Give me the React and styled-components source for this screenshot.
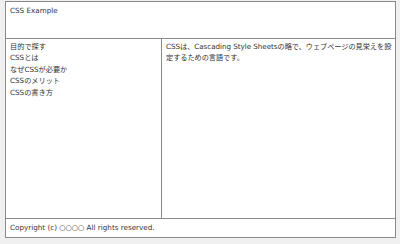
import React from 'react'
import styled, { createGlobalStyle } from 'styled-components'

const Global = createGlobalStyle`
  html, body {
    margin: 0;
    padding: 0;
    background: #f0f0f0;
  }
  body {
    font-family: "DejaVu Sans", "Noto Sans CJK JP", sans-serif;
    font-size: 7.2px;
    line-height: 11.5px;
    color: #333;
  }
`

const navItems = ['目的で探す', 'CSSとは', 'なぜCSSが必要か', 'CSSのメリット', 'CSSの書き方']

export default function App() {
  return (
    <>
      <Global />
      <Page>
        <Header>CSS Example</Header>
        <Main>
          <Nav>
            {navItems.map(item => (
              <NavItem key={item}>{item}</NavItem>
            ))}
          </Nav>
          <Content>
            CSSは、Cascading Style Sheetsの略で、ウェブページの見栄えを設定するための言語です。
          </Content>
        </Main>
        <Footer>Copyright (c) ○○○○ All rights reserved.</Footer>
      </Page>
    </>
  )
}

const Page = styled.div`
  margin: 1px 0 0 5px;
  width: 391px;
  height: 237px;
  box-sizing: border-box;
  border: 1px solid #8a8a8a;
  background: #fff;
  display: grid;
  grid-template-rows: 37px 1fr 18px;
`

const Header = styled.header`
  padding: 3px 4px;
  border-bottom: 1px solid #8a8a8a;
`

const Main = styled.main`
  display: grid;
  grid-template-columns: 156px 1fr;
  border-bottom: 1px solid #8a8a8a;
`

const Nav = styled.nav`
  display: flex;
  flex-direction: column;
  padding: 1.5px 4px;
  border-right: 1px solid #8a8a8a;
`

const NavItem = styled.div``

const Content = styled.section`
  padding: 1.5px 0 1.5px 4px;
  letter-spacing: -0.05px;
`

const Footer = styled.footer`
  padding: 3px 4px;
`
